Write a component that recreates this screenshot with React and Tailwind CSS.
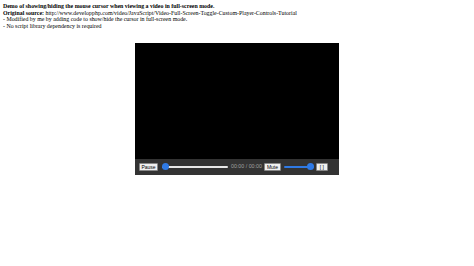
import React from 'react';

function App() {
    return (
        <div className="w-[474px] h-[266px] bg-white overflow-hidden" style={{ fontFamily: '"Liberation Serif", serif' }}>
            <div className="pl-[3px] pt-[3px] text-[5.9px] leading-[6.7px] text-black">
                <div className="font-bold">Demo of showing/hiding the mouse cursor when viewing a video in full-screen mode.</div>
                <div><b>Original source:</b> http://www.developphp.com/video/JavaScript/Video-Full-Screen-Toggle-Custom-Player-Controls-Tutorial</div>
                <div>- Modified by me by adding code to show/hide the cursor in full-screen mode.</div>
                <div>- No script library dependency is required</div>
            </div>

            <div className="ml-[135px] mt-[13px] w-[204px]">
                <div className="h-[116px] bg-black"></div>
                <div className="h-[16px] bg-[#333333] flex items-center pl-[4px] gap-[2px]" style={{ fontFamily: '"Liberation Sans", sans-serif' }}>
                    <div className="h-[8px] w-[19px] bg-[#f0f0f0] border border-[#888] rounded-[1px] text-[5px] leading-[6px] text-black flex items-center justify-center">Pause</div>
                    <div className="relative w-[66px] h-[8px] flex items-center ml-[2px]">
                        <div className="w-full h-[2px] bg-[#e8e8e8] rounded"></div>
                        <div className="absolute left-[0px] w-[7px] h-[7px] rounded-full bg-[#2f7ae5]"></div>
                    </div>
                    <div className="text-[5.3px] text-[#a0a0a0] ml-[1px] whitespace-nowrap">00:00 / 00:00</div>
                    <div className="h-[8px] w-[17px] bg-[#f0f0f0] border border-[#888] rounded-[1px] text-[5px] leading-[6px] text-black flex items-center justify-center">Mute</div>
                    <div className="relative w-[30px] h-[8px] flex items-center ml-[1px]">
                        <div className="w-full h-[2px] bg-[#2f7ae5] rounded"></div>
                        <div className="absolute right-[0px] w-[7px] h-[7px] rounded-full bg-[#2f7ae5]"></div>
                    </div>
                    <div className="h-[8px] w-[12px] bg-[#f0f0f0] border border-[#888] rounded-[1px] text-[5px] leading-[6px] text-black flex items-center justify-center">[ ]</div>
                </div>
            </div>
        </div>
    );
}

export default App;
